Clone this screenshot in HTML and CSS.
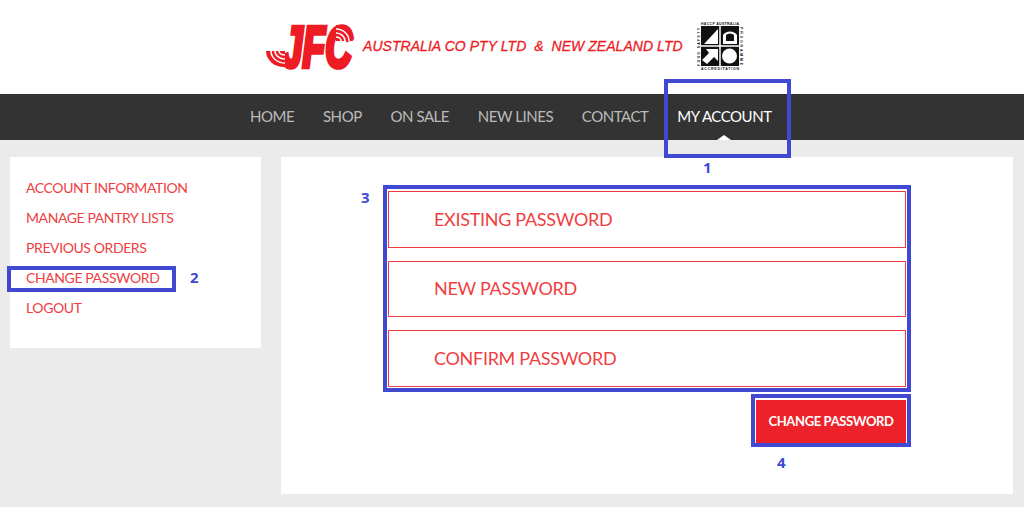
FILE: index.html
```html
<!DOCTYPE html>
<html lang="en">
<head>
    <meta charset="UTF-8">
    <meta name="viewport" content="width=device-width, initial-scale=1.0">
    <title>Change Password</title>
    <link rel="stylesheet" href="styles.css">
</head>
<body>
    <header class="site-header">
        <svg class="logo" width="92" height="70" viewBox="0 0 92 70" aria-label="JFC logo">
            <text class="logo-text" transform="translate(18 56.500) scale(1 1.560)">JFC</text>
            <path class="logo-fan" d="M21 41H2A18 16 0 0 0 21 57z"/>
            <path class="logo-fan" d="M72 31V15A17 16 0 0 1 89 31z"/>
            <g class="logo-arcs">
                <path d="M7 41a14 12 0 0 0 14 12"/>
                <path d="M11 41a10 8 0 0 0 10 8"/>
                <path d="M15 41a6 4 0 0 0 6 4"/>
                <path d="M72 19a13 12 0 0 1 13 12"/>
                <path d="M72 23a9 8 0 0 1 9 8"/>
                <path d="M72 27a5 4 0 0 1 5 4"/>
            </g>
        </svg>
        <span class="tagline">AUSTRALIA CO PTY LTD &nbsp;&amp;&nbsp; NEW ZEALAND LTD</span>
        <svg class="badge" width="48" height="50" viewBox="0 0 48 50" aria-label="HACCP Australia accreditation">
            <rect x="4" y="5" width="38" height="40" fill="#111"/>
            <path d="M23 5v40M4 25h38" stroke="#fff" stroke-width="1.500"/>
            <path d="M7 23l14-15v15z" fill="#fff"/>
            <path d="M26 23v-9a8 7 0 0 1 14 0v9z" fill="#fff"/>
            <path d="M29 20v-6a5 4 0 0 1 8 0v6z" fill="#111"/>
            <path d="M9 28h12v12l-4-4-7 7-5-4 7-7z" fill="#fff"/>
            <circle cx="32.500" cy="35" r="7.500" fill="#fff"/>
            <text class="badge-text" x="23" y="4" text-anchor="middle" textLength="38">HACCP AUSTRALIA</text>
            <text class="badge-text" x="23" y="49" text-anchor="middle" textLength="38">ACCREDITATION</text>
            <text class="badge-text" transform="translate(3 45) rotate(-90)" textLength="38">FOOD SAFETY</text>
            <text class="badge-text" transform="translate(43 6) rotate(90)" textLength="38">PROGRAMME</text>
        </svg>
    </header>

    <nav class="main-nav">
        <ul>
            <li><a href="#">HOME</a></li>
            <li><a href="#">SHOP</a></li>
            <li><a href="#">ON SALE</a></li>
            <li><a href="#">NEW LINES</a></li>
            <li><a href="#">CONTACT</a></li>
            <li><a href="#" class="active">MY ACCOUNT</a></li>
        </ul>
    </nav>

    <div class="page">
        <aside class="sidebar">
            <ul>
                <li><a href="#">ACCOUNT INFORMATION</a></li>
                <li><a href="#">MANAGE PANTRY LISTS</a></li>
                <li><a href="#">PREVIOUS ORDERS</a></li>
                <li><a href="#">CHANGE PASSWORD</a></li>
                <li><a href="#">LOGOUT</a></li>
            </ul>
        </aside>
        <main class="content">
            <form class="password-form">
                <input type="password" placeholder="EXISTING PASSWORD">
                <input type="password" placeholder="NEW PASSWORD">
                <input type="password" placeholder="CONFIRM PASSWORD">
                <button type="button">CHANGE PASSWORD</button>
            </form>
        </main>
    </div>

    <!-- numbered callouts drawn over the screenshot -->
    <div class="callout callout-1"></div>
    <div class="callout callout-2"></div>
    <div class="callout callout-3"></div>
    <div class="callout callout-4"></div>
    <span class="callout-num num-1">1</span>
    <span class="callout-num num-2">2</span>
    <span class="callout-num num-3">3</span>
    <span class="callout-num num-4">4</span>
</body>
</html>
```

FILE: styles.css
```css
* {
    margin: 0;
    padding: 0;
    box-sizing: border-box;
    font-family: Lato, Arial, sans-serif;
}

body {
    position: relative;
    height: 507px;
    overflow: hidden;
    background-color: #ebebeb;
}

.site-header {
    height: 94px;
    background-color: #fff;
    display: flex;
    align-items: flex-start;
    padding-left: 264px;
}

.logo {
    margin-top: 10px;
}

.logo-text {
    font-family: "Liberation Sans", Arial, sans-serif;
    font-size: 37px;
    font-weight: bold;
    font-style: italic;
    fill: #ed1c24;
    stroke: #ed1c24;
    stroke-width: 3;
}

.logo-fan {
    fill: #ed1c24;
}

.logo-arcs path {
    fill: none;
    stroke: #fff;
    stroke-width: 1.500;
}

.tagline {
    margin: 38px 0 0 7px;
    font-family: "Liberation Sans", Arial, sans-serif;
    font-size: 14px;
    font-style: italic;
    letter-spacing: 0.05px;
    color: #ed1c24;
    -webkit-text-stroke: 0.3px #ed1c24;
    white-space: nowrap;
}

.badge {
    margin: 21px 0 0 14px;
}

.badge-text {
    font-family: "Liberation Sans", Arial, sans-serif;
    font-size: 3.500px;
    font-weight: bold;
    fill: #111;
}

.main-nav {
    height: 46px;
    background-color: #333;
}

.main-nav ul {
    list-style: none;
    display: flex;
    height: 100%;
    padding-left: 250px;
    gap: 28.700px;
}

.main-nav a {
    position: relative;
    display: block;
    height: 100%;
    line-height: 45px;
    font-size: 15px;
    letter-spacing: -0.45px;
    color: #bbb;
    text-decoration: none;
}

.main-nav a.active {
    color: #fff;
}

.main-nav a.active::after {
    content: "";
    position: absolute;
    left: 50%;
    bottom: 0;
    margin-left: -7px;
    border-left: 7px solid transparent;
    border-right: 7px solid transparent;
    border-bottom: 5px solid #fff;
}

.page {
    display: flex;
    align-items: flex-start;
    gap: 20px;
    padding: 17px 11px 13px 10px;
}

.sidebar {
    width: 251px;
    height: 191px;
    padding: 16px 16px;
    background-color: #fff;
}

.sidebar ul {
    list-style: none;
}

.sidebar li {
    font-size: 14px;
    line-height: 30px;
}

.sidebar a {
    font-size: 14px;
    letter-spacing: -0.4px;
    color: #ef3e42;
    text-decoration: none;
}

.content {
    flex: 1;
    height: 337px;
    padding: 34px 107px 0;
    background-color: #fff;
}

.password-form {
    display: flex;
    flex-direction: column;
    width: 518px;
}

.password-form input {
    height: 56.500px;
    margin-bottom: 13px;
    padding: 0 0 1px 45px;
    border: 1px solid #ef3e42;
    border-radius: 0;
    outline: none;
    background-color: #fff;
    font-size: 18px;
    letter-spacing: -0.3px;
}

.password-form input::placeholder {
    color: #ef3e42;
    opacity: 1;
}

.password-form button {
    align-self: flex-end;
    width: 150px;
    height: 43px;
    padding-bottom: 1px;
    border: none;
    background-color: #ed2129;
    color: #fff;
    font-size: 13px;
    font-weight: bold;
    letter-spacing: -0.36px;
}

.callout {
    position: absolute;
    border: 4px solid #4249d1;
}

.callout-1 {
    left: 664px;
    top: 79px;
    width: 127px;
    height: 79px;
}

.callout-2 {
    left: 7px;
    top: 266px;
    width: 169px;
    height: 26px;
}

.callout-3 {
    left: 383px;
    top: 185px;
    width: 528px;
    height: 207px;
}

.callout-4 {
    left: 751px;
    top: 394px;
    width: 160px;
    height: 53px;
}

.callout-num {
    position: absolute;
    font-family: "Open Sans", sans-serif;
    font-size: 15px;
    font-weight: bold;
    line-height: 16px;
    color: #4249d1;
}

.num-1 {
    left: 703px;
    top: 159px;
}

.num-2 {
    left: 190px;
    top: 269px;
}

.num-3 {
    left: 361px;
    top: 189px;
}

.num-4 {
    left: 777px;
    top: 454px;
}
```
